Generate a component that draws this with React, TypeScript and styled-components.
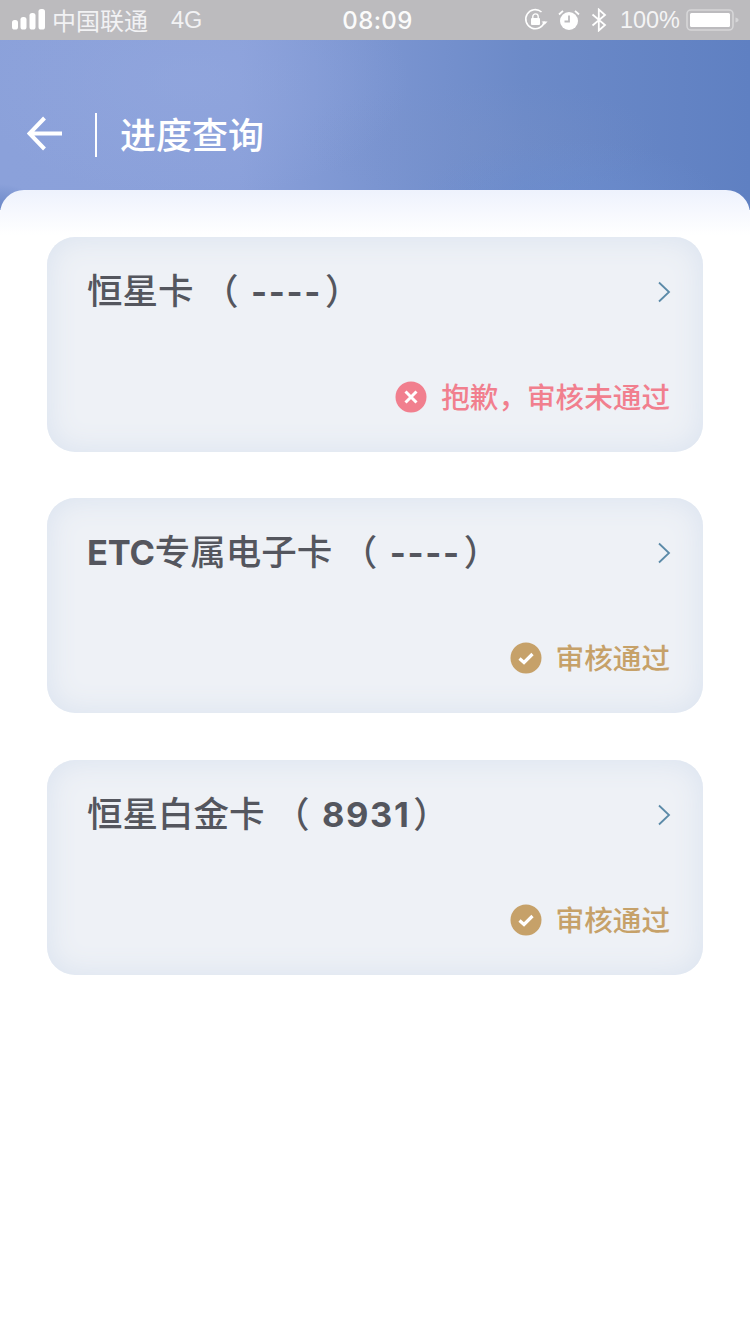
import React from "react";
import styled, { createGlobalStyle } from "styled-components";

const Global = createGlobalStyle`
  html, body { margin: 0; padding: 0; background: #fff; }
  * { box-sizing: border-box; }
  body { font-family: "Liberation Sans", "Noto Sans CJK SC", sans-serif; }
`;

const Page = styled.div`
  width: 750px;
  height: 1334px;
  overflow: hidden;
  background: #fff;
  display: flex;
  flex-direction: column;
`;

const StatusBar = styled.div`
  height: 40px;
  flex: none;
  background: #bcbbbe;
  color: #fff;
  display: grid;
  grid-template-columns: 1fr auto 1fr;
  align-items: center;
  padding: 0 11px 0 12px;
  font-size: 24px;
`;

const StatusLeft = styled.div`
  display: flex;
  align-items: center;
`;

const Carrier = styled.span`
  margin-left: 6px;
  color: #f2f2f4;
  font-family: "Noto Sans CJK SC", sans-serif;
  font-size: 24px;
  line-height: 38px;
`;

const Network = styled.span`
  margin-left: 23px;
  color: #f2f2f4;
  font-size: 23.5px;
  line-height: 40px;
`;

const Clock = styled.span`
  margin-left: 4px;
  font-family: "Inter", sans-serif;
  font-size: 24px;
  font-weight: 500;
  letter-spacing: 0.4px;
  color: #fbfbfb;
`;

const StatusRight = styled.div`
  display: flex;
  align-items: center;
  justify-content: flex-end;
`;

const Percent = styled.span`
  margin: 0 6px 0 13px;
  font-size: 23.5px;
  color: #f4f4f5;
`;

const Header = styled.header`
  height: 170px;
  flex: none;
  padding: 73px 0 53px 27px;
  display: flex;
  align-items: center;
  background:
    radial-gradient(ellipse 40px 26px at 0px 170px, rgba(100, 130, 195, 0.85), transparent),
    radial-gradient(ellipse 220px 120px at 190px 40px, rgba(150, 170, 224, 0.45), transparent),
    radial-gradient(ellipse 160px 70px at 570px 170px, rgba(110, 145, 212, 0.5), transparent),
    radial-gradient(ellipse 180px 60px at 480px 100px, rgba(120, 145, 200, 0.3), transparent),
    linear-gradient(90deg, #8ba1da 0%, #8aa0da 32%, #7b95d1 50%, #6c8ac8 70%, #5f80c2 100%);
`;

const BackIcon = styled.svg`
  width: 36px;
  height: 36px;
  flex: none;
  margin-bottom: 3px;
`;

const Divider = styled.div`
  width: 2px;
  height: 44px;
  margin-left: 32px;
  background: #fff;
`;

const NavTitle = styled.h1`
  margin: 0 0 4px 23px;
  color: #fff;
  font-family: "Noto Sans CJK SC", sans-serif;
  font-size: 36px;
  line-height: 44px;
  font-weight: 500;
`;

const Sheet = styled.main`
  flex: 1;
  margin-top: -20px;
  border-radius: 24px 24px 0 0;
  background: linear-gradient(180deg, #eef2fd 0, #ffffff 45px);
  padding: 46.7px 47px 0;
  display: flex;
  flex-direction: column;
  gap: 46.5px;
`;

const Card = styled.article`
  height: 215px;
  border-radius: 28px;
  background: #eef1f6;
  box-shadow: inset 0 0 30px #d9e2ef;
  padding: 34px 33px 34px 40px;
  display: flex;
  flex-direction: column;
  justify-content: space-between;
`;

const CardTop = styled.div`
  height: 42px;
  display: flex;
  align-items: center;
  justify-content: space-between;
`;

const CardTitle = styled.h2`
  margin: 0;
  color: #54565e;
  font-family: "Inter", "Noto Sans CJK SC", sans-serif;
  font-size: 35.5px;
  line-height: 42px;
  font-weight: 500;
  white-space: pre;
`;

const Latin = styled.span`
  font-weight: 700;
  font-size: 34.5px;
  letter-spacing: -0.2px;
`;

const Number = styled.span`
  margin: 0 3px;
  font-size: 34.5px;
  font-weight: 700;
  letter-spacing: 1.6px;
`;

const Chevron = styled.svg`
  width: 14px;
  height: 22px;
  flex: none;
  margin-right: -1px;
`;

const CardBottom = styled.div`
  height: 42px;
  display: flex;
  align-items: center;
  justify-content: flex-end;
  gap: 14px;
`;

const StatusIcon = styled.svg`
  width: 32px;
  height: 32px;
  flex: none;
`;

const StatusText = styled.span<{ $tone: string }>`
  margin-bottom: 2px;
  color: ${(p) => p.$tone};
  font-family: "Noto Sans CJK SC", sans-serif;
  font-size: 28.6px;
  line-height: 42px;
  font-weight: 500;
`;

const Signal = () => (
  <svg width="34" height="22" viewBox="0 0 34 22" fill="#fff">
    <rect x="0" y="11" width="6" height="9.5" rx="2.6" />
    <rect x="8.5" y="8" width="6" height="12.5" rx="2.6" />
    <rect x="17.5" y="4" width="6" height="16.5" rx="2.6" />
    <rect x="26.5" y="0" width="6.5" height="20.5" rx="2.6" />
  </svg>
);

const RotationLock = () => (
  <svg width="24" height="24" viewBox="0 0 24 24" fill="none">
    <path d="M20.5 13.5A9.5 9.5 0 1 1 17.5 4" stroke="#fff" strokeWidth="1.6" />
    <path d="M17.6 13.6h6l-3 3.2z" fill="#fff" />
    <rect x="7" y="10" width="9" height="7" rx="1" fill="#fff" />
    <path d="M8.8 10.5V8.6a2.7 2.7 0 0 1 5.4 0v1.9" stroke="#fff" strokeWidth="1.4" />
  </svg>
);

const Alarm = () => (
  <svg width="22" height="22" viewBox="0 0 22 22" style={{ marginLeft: 10 }}>
    <circle cx="11" cy="12" r="9" fill="#fff" />
    <path d="M11 6.5V12.5H6.5" stroke="#bcbbbe" strokeWidth="1.8" fill="none" />
    <path d="M1 5.5 5 1.800M21 5.500 17 1.800" stroke="#fff" strokeWidth="1.800" />
  </svg>
);

const Bluetooth = () => (
  <svg width="16" height="24" viewBox="0 0 16 24" fill="none" style={{ marginLeft: 11 }}>
    <path d="M1.500 6.500 14 17 7.800 22.500V1.500L14 7 1.500 17.500" stroke="#fff" strokeWidth="1.800" />
  </svg>
);

const Battery = () => (
  <svg width="53" height="24" viewBox="0 0 53 24">
    <rect x="1" y="2" width="46" height="20" rx="4" fill="none" stroke="#d6d6d8" strokeWidth="1.600" />
    <rect x="4" y="5" width="40" height="14" rx="1.500" fill="#fff" />
    <path d="M49.500 9.500c2 .4 3 1.200 3 2.500s-1 2.100-3 2.500z" fill="#d6d6d8" />
  </svg>
);

const Fail = () => (
  <StatusIcon viewBox="0 0 32 32">
    <circle cx="16" cy="16" r="15.500" fill="#f17f8e" />
    <path d="M10.500 10.500 21.500 21.500M21.500 10.500 10.500 21.500" stroke="#fff" strokeWidth="3" />
  </StatusIcon>
);

const Pass = () => (
  <StatusIcon viewBox="0 0 32 32">
    <circle cx="16" cy="16" r="15.500" fill="#c6a169" />
    <path d="M9.500 16.500 14 20.500 22.500 12" stroke="#fff" strokeWidth="3.200" fill="none" />
  </StatusIcon>
);

const cards = [
  { prefix: "", name: "恒星卡", number: "----", ok: false, text: "抱歉，审核未通过" },
  { prefix: "ETC", name: "专属电子卡", number: "----", ok: true, text: "审核通过" },
  { prefix: "", name: "恒星白金卡", number: "8931", ok: true, text: "审核通过" },
];

export default function App() {
  return (
    <Page>
      <Global />
      <StatusBar>
        <StatusLeft>
          <Signal />
          <Carrier>中国联通</Carrier>
          <Network>4G</Network>
        </StatusLeft>
        <Clock>08:09</Clock>
        <StatusRight>
          <RotationLock />
          <Alarm />
          <Bluetooth />
          <Percent>100%</Percent>
          <Battery />
        </StatusRight>
      </StatusBar>
      <Header>
        <BackIcon viewBox="0 0 36 36" fill="none">
          <path d="M35 17.500H3M17.500 2 2.500 17.500 17.500 33" stroke="#fff" strokeWidth="4" />
        </BackIcon>
        <Divider />
        <NavTitle>进度查询</NavTitle>
      </Header>
      <Sheet>
        {cards.map((c) => (
          <Card key={c.name}>
            <CardTop>
              <CardTitle>
                {c.prefix && <Latin>{c.prefix}</Latin>}
                {c.name} （ <Number>{c.number}</Number>）
              </CardTitle>
              <Chevron viewBox="0 0 14 22" fill="none">
                <path d="M2 1.500 12 11 2 20.500" stroke="#5b8aa8" strokeWidth="1.800" />
              </Chevron>
            </CardTop>
            <CardBottom>
              {c.ok ? <Pass /> : <Fail />}
              <StatusText $tone={c.ok ? "#c6a169" : "#f17f8e"}>{c.text}</StatusText>
            </CardBottom>
          </Card>
        ))}
      </Sheet>
    </Page>
  );
}
